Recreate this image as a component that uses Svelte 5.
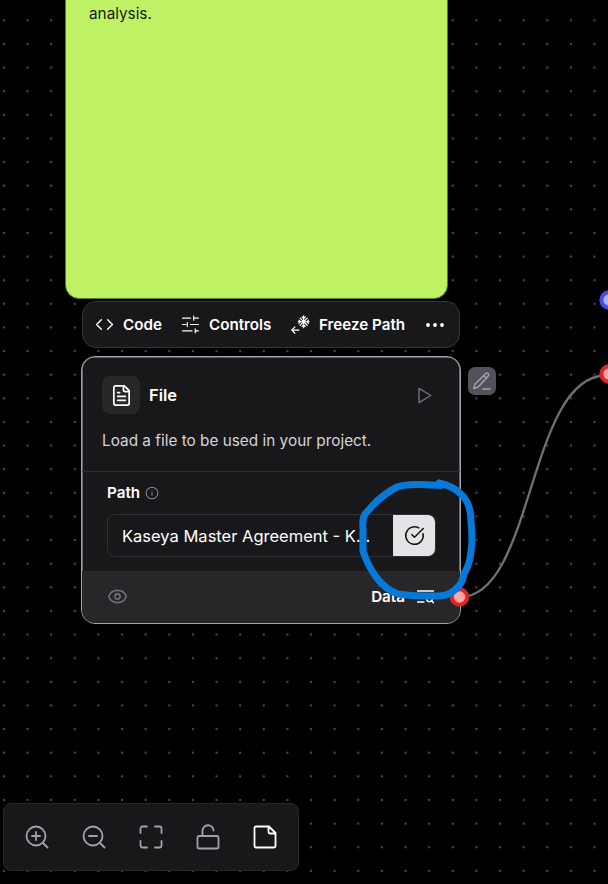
<svelte:options runes={true} />

<main class="canvas">
  <svg class="layer" width="608" height="884" aria-hidden="true">
    <defs>
      <pattern id="dots" x="-7.9" y="8.5" width="23.626" height="23.626" patternUnits="userSpaceOnUse">
        <circle cx="11.8" cy="11.8" r="1.2" fill="#48484b" />
      </pattern>
    </defs>
    <rect width="608" height="884" fill="url(#dots)" />
    <path d="M460 597C534 597 528 375.500 606 375.500" fill="none" stroke="#717171" stroke-width="2.300" />
  </svg>

  <section class="note"><p>analysis.</p></section>

  <nav class="toolbar">
    <button class="code"><svg class="i" width="19" height="19" viewBox="0 0 24 24"><path d="m16 18 6-6-6-6M8 6l-6 6 6 6" /></svg><span>Code</span></button>
    <button class="controls"><svg class="i thin" width="19" height="19" viewBox="0 0 24 24"><path d="M22 4h-6M12 4H2M22 12H12M6 12H2M22 20h-4M14 20H2M16 1.500v5M8 9.500v5M18 17.500v5" /></svg><span>Controls</span></button>
    <button class="freeze">
      <svg class="i thin" width="19" height="19" viewBox="0 0 24 24"><path d="M16 1v15M9 8.500h14M11.500 4l9 9M20.500 4l-9 9M14 2.500l2 2 2-2M14 14.500l2-2 2 2M10 6.500l2 2-2 2M22 6.500l-2 2 2 2M10 19H1M5 15l-4 4 4 4" /></svg><span>Freeze Path</span>
    </button>
    <button class="more" aria-label="More"><svg width="20" height="20" viewBox="0 0 20 20"><circle cx="3" cy="10" r="1.900" /><circle cx="10" cy="10" r="1.900" /><circle cx="17" cy="10" r="1.900" /></svg></button>
  </nav>

  <article class="node">
    <header>
      <div class="title">
        <span class="file"><svg class="i" width="23" height="23" viewBox="0 0 24 24"><path d="M15 2H6a2 2 0 0 0-2 2v16a2 2 0 0 0 2 2h12a2 2 0 0 0 2-2V7ZM14 2v4a2 2 0 0 0 2 2h4M10 9H8M16 13H8M16 17H8" /></svg></span>
        <h2>File</h2>
        <svg class="play i" width="19" height="19" viewBox="0 0 24 24"><path d="m5 3 15 9-15 9Z" /></svg>
      </div>
      <p>Load a file to be used in your project.</p>
    </header>
    <div class="body">
      <div class="label"><span>Path</span><svg class="i" width="14" height="14" viewBox="0 0 24 24"><circle cx="12" cy="12" r="10" /><path d="M12 16v-5M12 8v.1" /></svg></div>
      <div class="field">
        <span>Kaseya Master Agreement - K...</span>
        <button aria-label="Select file"><svg class="i" width="21" height="21" viewBox="0 0 24 24"><path d="M21.800 10A10 10 0 1 1 17 3.340M9 11l3 3L22 4" /></svg></button>
      </div>
    </div>
    <footer>
      <svg class="eye i" width="21" height="21" viewBox="0 0 24 24"><path d="M2.060 12.350a1 1 0 0 1 0-.7 10.750 10.750 0 0 1 19.880 0 1 1 0 0 1 0 .7 10.750 10.750 0 0 1-19.880 0Z" /><circle cx="12" cy="12" r="3" /></svg>
      <span>Data</span>
      <svg class="search i" width="19" height="19" viewBox="0 0 24 24"><path d="M22 5H2M10 12H2M10 19H2M22 20l-2.500-2.500" /><circle cx="17" cy="15" r="3.500" /></svg>
    </footer>
  </article>

  <button class="edit" aria-label="Edit"><svg class="i" width="20" height="20" viewBox="0 0 24 24"><path d="M13 21.500h9M16.400 3.100a2.100 2.100 0 0 1 3 3L7.400 19.100a2 2 0 0 1-.9.500L2 21l1.400-4.500a2 2 0 0 1 .5-.9ZM14 5.500l3.500 3.500" /></svg></button>

  <svg class="layer" width="608" height="884" aria-hidden="true">
    <g stroke-width="4">
      <circle cx="459.500" cy="597" r="7.700" fill="#fca5a5" stroke="#dc2626" />
      <circle cx="609" cy="300" r="7.700" fill="#a5b4fc" stroke="#4f46e5" />
      <circle cx="609" cy="374" r="7.700" fill="#fca5a5" stroke="#dc2626" />
    </g>
    <path d="M439 483 441 485.500 420 484.500Q406 484 397 487Q385 493 373 505L365 514Q362 519 363 529V551Q367 564 376 577Q386 590 398 594Q411 596 425 596H439Q449 596 457 588Q462 584 464 574Q470 564 471 551Q473 540 471 522Q471 503 461 494Q453 486 439 483" fill="none" stroke="#0679d9" stroke-width="7" stroke-linejoin="round" stroke-linecap="round" />
  </svg>

  <nav class="zoom">
    <button aria-label="Zoom in"><svg class="i" viewBox="0 0 24 24"><circle cx="11" cy="11" r="9.500" /><path d="m18 18 4.500 4.500M7 11h8M11 7v8" /></svg></button>
    <button aria-label="Zoom out"><svg class="i" viewBox="0 0 24 24"><circle cx="11" cy="11" r="9.500" /><path d="m18 18 4.500 4.500M7 11h8" /></svg></button>
    <button aria-label="Fit view"><svg class="i" viewBox="0 0 24 24"><path d="M8 1.500H3.500a2 2 0 0 0-2 2V8M16 1.500h4.500a2 2 0 0 1 2 2V8M8 22.500H3.500a2 2 0 0 1-2-2V16M16 22.500h4.500a2 2 0 0 0 2-2V16" /></svg></button>
    <button aria-label="Lock"><svg class="i" viewBox="0 0 24 24"><rect x="1.500" y="11" width="21" height="12.500" rx="1.800" /><path d="M6.500 11V6a5.500 5.500 0 0 1 11-.5" /></svg></button>
    <button class="on" aria-label="Add note"><svg class="i" viewBox="0 0 24 24"><path d="M16 1.500H3a1.500 1.500 0 0 0-1.500 1.500v18A1.500 1.500 0 0 0 3 22.500h18a1.500 1.500 0 0 0 1.500-1.500V8ZM15.500 1.500V7a1.500 1.500 0 0 0 1.500 1.500h5.500" /></svg></button>
  </nav>
</main>

<style>
  :global(body) { background: #000; }
  * { box-sizing: border-box; }
  .canvas { position: relative; width: 608px; height: 884px; overflow: hidden; background: #000; color: #fff; font-family: Inter, sans-serif; }
  .layer { position: absolute; inset: 0; pointer-events: none; }
  .i { fill: none; stroke: currentColor; stroke-width: 1.800; stroke-linecap: round; stroke-linejoin: round; flex: none; overflow: visible; }
  .i.thin { stroke-width: 1.500; }
  button { border: 0; padding: 0; background: none; color: inherit; font: inherit; display: flex; align-items: center; justify-content: center; }
  h2, p { margin: 0; }
  .note { position: absolute; left: 65px; top: -20px; width: 383px; height: 318.500px; padding: 23px; background: #bef264; border: 1px solid #5f7935; border-radius: 14px; color: #18181b; font-size: 15.300px; line-height: 20px; }
  .toolbar { position: absolute; left: 82px; top: 301px; width: 378px; height: 47px; display: flex; align-items: center; padding-left: 12px; background: #18181b; border: 1px solid #34343a; border-radius: 14px; font-size: 15.200px; font-weight: 600; white-space: nowrap; }
  .toolbar button { gap: 9px; justify-content: flex-start; }
  .code { width: 86px; }
  .controls { width: 110px; }
  .freeze { width: 134px; }
  .more { fill: #fff; }
  .node { position: absolute; left: 81px; top: 356px; width: 380px; height: 268px; background: #18181b; border: 1px solid #a1a1aa; box-shadow: inset 0 0 0 0.600px #a1a1aa; border-radius: 14px; overflow: hidden; display: flex; flex-direction: column; }
  header { height: 114.500px; border-bottom: 1px solid #2e2e32; padding: 19px 20px 0; }
  .title { display: flex; align-items: center; height: 38px; }
  .file { width: 38px; height: 38px; background: #27272a; border-radius: 8px; display: grid; place-items: center; margin-right: 9px; }
  h2 { font-size: 16.500px; font-weight: 600; }
  .play { margin-left: auto; margin-right: 6px; color: #71717a; }
  header p { font-size: 15.350px; line-height: 20px; margin-top: 17px; color: #d4d4d8; white-space: nowrap; }
  .body { height: 99px; padding: 11px 24px 0 25px; }
  .label { display: flex; align-items: center; gap: 5px; height: 20px; font-size: 15.200px; font-weight: 600; }
  .label svg { color: #85858d; }
  .field { margin-top: 11px; height: 43px; display: flex; align-items: stretch; border: 1px solid #303035; border-radius: 8px; overflow: hidden; font-size: 16.500px; }
  .field span { flex: 1; padding-left: 14px; line-height: 42px; white-space: nowrap; }
  .field button { width: 42px; background: #e4e4e7; color: #18181b; }
  footer { flex: 1; display: flex; align-items: center; background: #27272a; padding: 0 25px 0 25px; }
  .eye { color: #71717a; }
  footer span { margin-left: auto; margin-right: 11px; font-size: 15.200px; font-weight: 600; }
  .edit { position: absolute; left: 468px; top: 367px; width: 28px; height: 28px; border-radius: 7px; background: #52525b; color: #a1a1aa; }
  .zoom { position: absolute; left: 3px; top: 803px; width: 296px; height: 68px; display: flex; align-items: center; gap: 33px; padding-left: 21px; background: #18181b; border: 1px solid #27272a; border-radius: 8px; color: #a1a1aa; }
  .zoom svg { width: 24px; height: 24px; }
  .zoom .on { color: #fff; }
</style>
